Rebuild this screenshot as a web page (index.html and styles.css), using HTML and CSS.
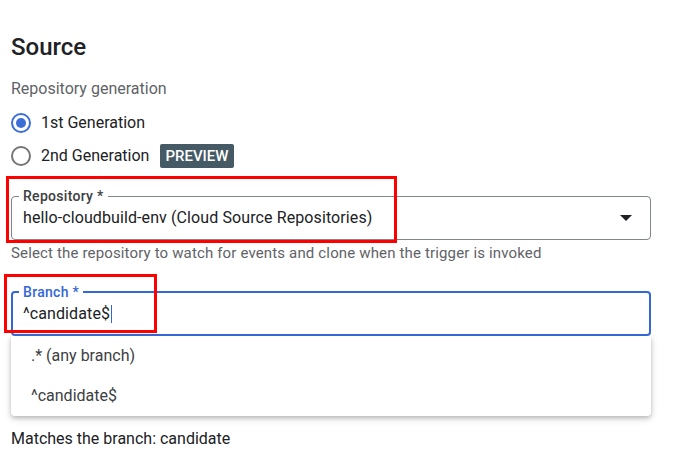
FILE: index.html
```html
<!DOCTYPE html>
<html>
<head>
  <meta charset="UTF-8">
  <title>Source</title>
  <link rel="stylesheet" href="styles.css">
</head>
<body>

<div class="section">
  <h2 class="title">Source</h2>

  <div class="group-label">Repository generation</div>
  <label class="radio-row">
    <span class="radio checked"></span>
    <span>1st Generation</span>
  </label>
  <label class="radio-row">
    <span class="radio"></span>
    <span>2nd Generation</span>
    <span class="badge">PREVIEW</span>
  </label>

  <!-- Repository select -->
  <div class="field-wrap">
    <fieldset class="field">
      <legend>Repository *</legend>
      <div class="field-row">
        <span class="value">hello-cloudbuild-env (Cloud Source Repositories)</span>
        <svg class="arrow" width="12" height="6" viewBox="0 0 12 6"><path d="M0 0h12L6 6z" fill="#202124"/></svg>
      </div>
    </fieldset>
    <div class="mark mark-repo"></div>
  </div>
  <div class="hint">Select the repository to watch for events and clone when the trigger is invoked</div>

  <!-- Branch input with suggestions -->
  <div class="field-wrap branch-wrap">
    <fieldset class="field focused">
      <legend>Branch *</legend>
      <div class="field-row">
        <span class="value">^candidate$<span class="caret"></span></span>
      </div>
    </fieldset>
    <div class="mark mark-branch"></div>
  </div>
  <div class="options">
    <div class="option">.* (any branch)</div>
    <div class="option">^candidate$</div>
  </div>

  <div class="match">Matches the branch: candidate</div>
</div>

</body>
</html>
```

FILE: styles.css
```css
body {
  margin: 0;
  font-family: Roboto, "Noto Sans", Arial, sans-serif;
  color: #202124;
  background: #fff;
}
.section {
  width: 640px;
  padding: 31px 0 0 11px;
}
.title {
  margin: 0;
  font-size: 24px;
  font-weight: 500;
  line-height: 32px;
}
.group-label {
  margin-top: 16px;
  font-size: 16px;
  line-height: 20px;
  color: #5f6368;
}
.radio-row {
  display: flex;
  align-items: center;
  height: 33px;
  font-size: 16px;
}
.radio-row:first-of-type {
  margin-top: 7px;
}
.radio {
  box-sizing: border-box;
  width: 20px;
  height: 20px;
  margin-right: 10px;
  border: 2px solid #757575;
  border-radius: 50%;
  position: relative;
}
.radio.checked {
  border-color: #3b6fd8;
}
.radio.checked::after {
  content: "";
  position: absolute;
  left: 3px;
  top: 3px;
  width: 10px;
  height: 10px;
  border-radius: 50%;
  background: #3b6fd8;
}
.badge {
  margin-left: 11px;
  padding: 0 5px;
  height: 24px;
  line-height: 24px;
  border-radius: 2px;
  background: #455a64;
  color: #fff;
  font-size: 15px;
  font-weight: 500;
}
.field-wrap {
  position: relative;
  margin-top: 16px;
}
.field {
  margin: 0;
  padding: 0 18px 10px 11px;
  border: 1px solid #80868b;
  border-radius: 4px;
}
.field legend {
  margin-left: -4px;
  padding: 0 4px;
  font-size: 14px;
  font-weight: 500;
  line-height: 16px;
  letter-spacing: 0.3px;
  color: #3c4043;
}
.field-row {
  display: flex;
  align-items: center;
  justify-content: space-between;
  height: 24px;
  margin-top: 1px;
}
.value {
  font-size: 16px;
  letter-spacing: 0.1px;
  color: #202124;
}
.arrow {
  margin-top: 2px;
}
.field.focused {
  padding: 0 17px 9px 10px;
  border: 2px solid #3367d6;
}
.field.focused legend {
  color: #3367d6;
}
.caret {
  display: inline-block;
  width: 1px;
  height: 18px;
  margin-left: 1px;
  vertical-align: -4px;
  background: #3367d6;
}
.hint {
  margin-top: 5px;
  font-size: 15px;
  line-height: 16px;
  letter-spacing: 0.15px;
  color: #5f6368;
}
.branch-wrap {
  margin-top: 23px;
}
.options {
  height: 80px;
  border-radius: 0 0 4px 4px;
  background: #fff;
  box-shadow: 0 2px 4px rgba(0,0,0,0.2), 0 3px 8px rgba(0,0,0,0.12);
}
.option {
  height: 40px;
  line-height: 40px;
  padding-left: 20px;
  font-size: 16px;
  color: #3c4043;
}
.match {
  margin-top: 13px;
  font-size: 16px;
  line-height: 20px;
  color: #202124;
}
.mark {
  position: absolute;
  border: 3px solid #f00;
  pointer-events: none;
}
.mark-repo {
  left: -5px;
  top: -12px;
  width: 385px;
  height: 61px;
}
.mark-branch {
  left: -7px;
  top: -10px;
  width: 147px;
  height: 53px;
}
```
